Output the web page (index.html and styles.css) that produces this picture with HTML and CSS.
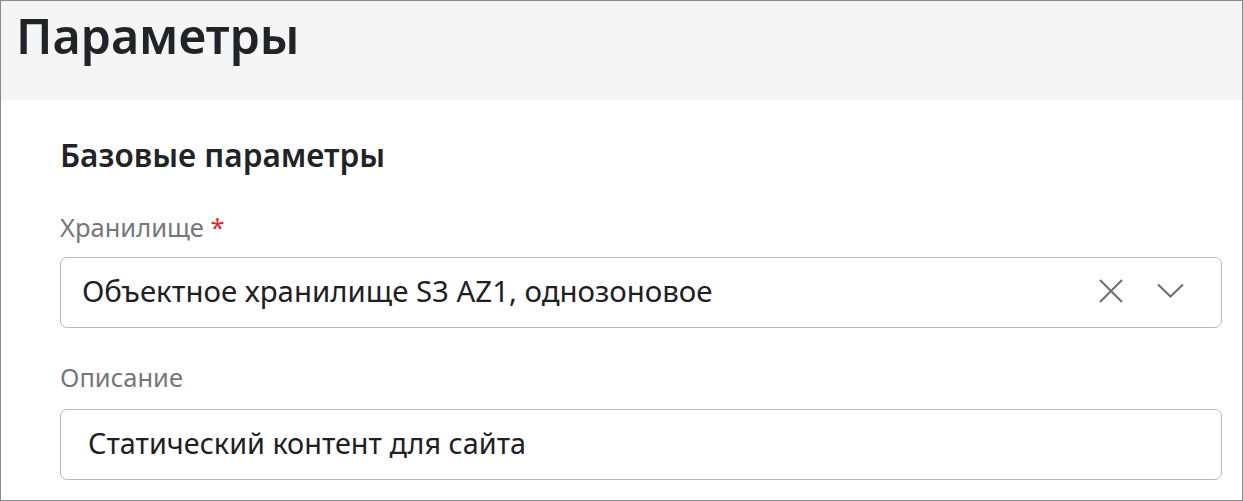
FILE: index.html
```html
<!DOCTYPE html>
<html lang="ru">
<head>
<meta charset="utf-8">
<link rel="stylesheet" href="styles.css">
</head>
<body>
<div class="frame">
  <header class="head">
    <h1 class="title">Параметры</h1>
  </header>
  <main class="content">
    <h2 class="section">Базовые параметры</h2>
    <div class="field field-storage">
      <div class="label">Хранилище <span class="req">*</span></div>
      <div class="box select">
        <span class="value">Объектное хранилище S3 AZ1, однозоновое</span>
        <span class="icons">
          <svg class="ic" width="24" height="24" viewBox="0 0 24 24"><path d="M1 1 L23 23 M23 1 L1 23" stroke="#6d6d70" stroke-width="2" fill="none"/></svg>
          <svg class="ic" width="27" height="15" viewBox="0 0 27 15"><path d="M1 1.5 L13.5 13.5 L26 1.5" stroke="#6d6d70" stroke-width="2" fill="none"/></svg>
        </span>
      </div>
    </div>
    <div class="field field-desc">
      <div class="label">Описание</div>
      <div class="box input">
        <span class="value">Статический контент для сайта</span>
      </div>
    </div>
  </main>
</div>
</body>
</html>
```

FILE: styles.css
```css
* { box-sizing: border-box; }
html, body { margin: 0; padding: 0; background: #fff; }
body { font-family: "Noto Sans", "Open Sans", sans-serif; color: #222327; }
.frame {
  width: 1243px;
  height: 501px;
  border: 1px solid #8a8a8a;
  overflow: hidden;
  display: flex;
  flex-direction: column;
}
.head {
  background: #f5f5f5;
  height: 99px;
  flex: none;
  padding: 4px 15px 0;
}
.title {
  margin: 0;
  font-size: 48.5px;
  font-weight: 600;
  line-height: 60px;
  color: #222327;
}
.content {
  padding: 35px 20px 0 59px;
  display: flex;
  flex-direction: column;
}
.section {
  margin: 0 0 36px;
  font-size: 31.6px;
  font-weight: 600;
  line-height: 40px;
  color: #222327;
}
.field { display: flex; flex-direction: column; }
.field-storage { margin-bottom: 33px; }
.label {
  font-size: 25.5px;
  line-height: 32px;
  color: #76777b;
}
.field-storage .label { margin-bottom: 14px; }
.field-desc .label { margin-bottom: 16px; }
.req { color: #e0282e; }
.box {
  height: 71px;
  border: 1px solid #b9b9bc;
  border-radius: 7px;
  display: flex;
  align-items: center;
  color: #1f2024;
}
.select { padding: 0 37px 4px 21px; font-size: 29.4px; }
.input { padding: 0 24px 5px 27px; font-size: 28.8px; }
.value { flex: 1; white-space: nowrap; }
.icons { display: flex; align-items: center; gap: 34px; }
.ic { display: block; }
```
